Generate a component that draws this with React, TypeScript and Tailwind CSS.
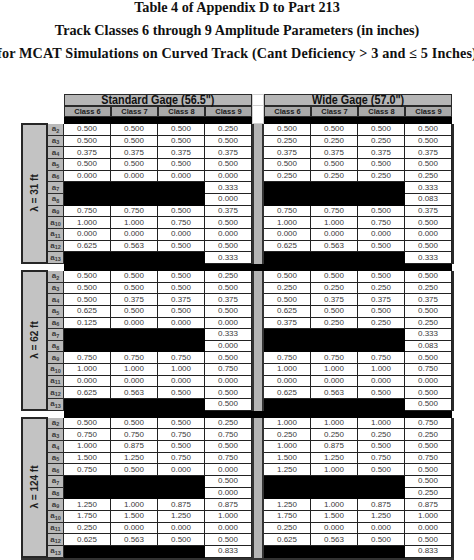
type Row = (string | null)[];

interface Block {
  label: string;
  std: Row[];
  wide: Row[];
}

const B = null;

const blocks: Block[] = [
  {
    label: 'λ = 31 ft',
    std: [
      ['0.500', '0.500', '0.500', '0.250'],
      ['0.500', '0.500', '0.500', '0.500'],
      ['0.375', '0.375', '0.375', '0.375'],
      ['0.500', '0.500', '0.500', '0.500'],
      ['0.000', '0.000', '0.000', '0.000'],
      [B, B, B, '0.333'],
      [B, B, B, '0.000'],
      ['0.750', '0.750', '0.500', '0.375'],
      ['1.000', '1.000', '0.750', '0.500'],
      ['0.000', '0.000', '0.000', '0.000'],
      ['0.625', '0.563', '0.500', '0.500'],
      [B, B, B, '0.333'],
    ],
    wide: [
      ['0.500', '0.500', '0.500', '0.500'],
      ['0.250', '0.250', '0.250', '0.500'],
      ['0.375', '0.375', '0.375', '0.375'],
      ['0.500', '0.500', '0.500', '0.500'],
      ['0.250', '0.250', '0.250', '0.250'],
      [B, B, B, '0.333'],
      [B, B, B, '0.083'],
      ['0.750', '0.750', '0.500', '0.375'],
      ['1.000', '1.000', '0.750', '0.500'],
      ['0.000', '0.000', '0.000', '0.000'],
      ['0.625', '0.563', '0.500', '0.500'],
      [B, B, B, '0.333'],
    ],
  },
  {
    label: 'λ = 62 ft',
    std: [
      ['0.500', '0.500', '0.500', '0.250'],
      ['0.500', '0.500', '0.500', '0.500'],
      ['0.500', '0.375', '0.375', '0.375'],
      ['0.625', '0.500', '0.500', '0.500'],
      ['0.125', '0.000', '0.000', '0.000'],
      [B, B, B, '0.333'],
      [B, B, B, '0.000'],
      ['0.750', '0.750', '0.750', '0.500'],
      ['1.000', '1.000', '1.000', '0.750'],
      ['0.000', '0.000', '0.000', '0.000'],
      ['0.625', '0.563', '0.500', '0.500'],
      [B, B, B, '0.500'],
    ],
    wide: [
      ['0.500', '0.500', '0.500', '0.500'],
      ['0.250', '0.250', '0.250', '0.250'],
      ['0.500', '0.375', '0.375', '0.375'],
      ['0.625', '0.500', '0.500', '0.500'],
      ['0.375', '0.250', '0.250', '0.250'],
      [B, B, B, '0.333'],
      [B, B, B, '0.083'],
      ['0.750', '0.750', '0.750', '0.500'],
      ['1.000', '1.000', '1.000', '0.750'],
      ['0.000', '0.000', '0.000', '0.000'],
      ['0.625', '0.563', '0.500', '0.500'],
      [B, B, B, '0.500'],
    ],
  },
  {
    label: 'λ = 124 ft',
    std: [
      ['0.500', '0.500', '0.500', '0.250'],
      ['0.750', '0.750', '0.750', '0.750'],
      ['1.000', '0.875', '0.500', '0.500'],
      ['1.500', '1.250', '0.750', '0.750'],
      ['0.750', '0.500', '0.000', '0.000'],
      [B, B, B, '0.500'],
      [B, B, B, '0.000'],
      ['1.250', '1.000', '0.875', '0.875'],
      ['1.750', '1.500', '1.250', '1.000'],
      ['0.250', '0.000', '0.000', '0.000'],
      ['0.625', '0.563', '0.500', '0.500'],
      [B, B, B, '0.833'],
    ],
    wide: [
      ['1.000', '1.000', '1.000', '0.750'],
      ['0.250', '0.250', '0.250', '0.250'],
      ['1.000', '0.875', '0.500', '0.500'],
      ['1.500', '1.250', '0.750', '0.750'],
      ['1.250', '1.000', '0.500', '0.500'],
      [B, B, B, '0.500'],
      [B, B, B, '0.250'],
      ['1.250', '1.000', '0.875', '0.875'],
      ['1.750', '1.500', '1.250', '1.000'],
      ['0.250', '0.000', '0.000', '0.000'],
      ['0.625', '0.563', '0.500', '0.500'],
      [B, B, B, '0.833'],
    ],
  },
];

const subs = [2, 3, 4, 5, 6, 7, 8, 9, 10, 11, 12, 13];

function ValueGrid({ rows }: { rows: Row[] }) {
  return (
    <div className="grid w-[188px] grid-cols-4">
      {rows.flatMap((row, r) =>
        row.map((v, c) =>
          v === null ? (
            <div key={`${r}-${c}`} className="h-[11.67px] bg-black" />
          ) : (
            <div
              key={`${r}-${c}`}
              className="flex h-[11.67px] items-center justify-center border-b border-r border-[#222] bg-white text-[8px] leading-none text-[#3a3a3a]"
            >
              {v}
            </div>
          ),
        ),
      )}
    </div>
  );
}

function ClassRow() {
  return (
    <div className="flex w-[188px]">
      {['Class 6', 'Class 7', 'Class 8', 'Class 9'].map((c) => (
        <div
          key={c}
          className="flex h-[11px] w-[47px] items-center justify-center border border-[#2a2a2a] bg-[#a9a9a9] text-[7.5px] font-bold leading-none text-[#1a1a1a]"
        >
          {c}
        </div>
      ))}
    </div>
  );
}

function GageHeader({ title }: { title: string }) {
  return (
    <div className="flex h-[12px] w-[188px] items-center justify-center border border-[#2a2a2a] bg-[#b6b6b6]">
      <span className="inline-block scale-x-[0.9] whitespace-nowrap text-[12px] font-bold leading-none text-[#111]">
        {title}
      </span>
    </div>
  );
}

export default function App() {
  return (
    <div className="h-[560px] w-[474px] overflow-hidden bg-white font-['Liberation_Sans',Arial,sans-serif]">
      <div className="-mt-[4px] text-center font-['Liberation_Serif','Times_New_Roman',serif] text-[14.2px] font-bold leading-[23px] text-[#111]">
        <p>Table 4 of Appendix D to Part 213</p>
        <p>Track Classes 6 through 9 Amplitude Parameters (in inches)</p>
        <p className="-mx-4 whitespace-nowrap tracking-[0.15px]">
          for MCAT Simulations on Curved Track (Cant Deficiency &gt; 3 and ≤ 5 Inches)
        </p>
      </div>

      <div className="mt-[29px] pl-[21px]">
        {/* gage headers */}
        <div className="flex pl-[43px]">
          <GageHeader title={'Standard Gage (56.5")'} />
          <div className="w-[12px] border border-[#d0d0d0] bg-white" />
          <GageHeader title={'Wide Gage (57.0")'} />
        </div>
        <div className="flex pl-[43px]">
          <ClassRow />
          <div className="w-[12px] border-x border-[#d0d0d0] bg-white" />
          <ClassRow />
        </div>
        <div className="flex pl-[43px]">
          <div className="h-[7px] w-[188px] bg-black" />
          <div className="w-[12px] border-x border-b border-[#d0d0d0] bg-white" />
          <div className="h-[7px] w-[188px] bg-black" />
        </div>

        {blocks.map((b, i) => (
          <div key={b.label}>
            {i > 0 && (
              <div className="ml-[43px] h-[7px] w-[388px] bg-black" />
            )}
            <div className="flex">
              <div className="-mt-px flex w-[27px] items-center justify-center border-2 border-[#262626] bg-[#c3c3c3]">
                <span className="-rotate-90 whitespace-nowrap text-[10px] font-bold leading-none text-[#1e1e1e]">
                  {b.label}
                </span>
              </div>
              <div className="flex w-[16px] flex-col">
                {subs.map((n) => (
                  <div
                    key={n}
                    className="flex h-[11.67px] items-center justify-center border-b border-r border-[#2a2a2a] bg-[#b9b9b9] text-[8px] font-bold leading-none text-[#3a3a3a]"
                  >
                    a<sub className="text-[5.5px]">{n}</sub>
                  </div>
                ))}
              </div>
              <ValueGrid rows={b.std} />
              <div className="w-[12px] border-x-2 border-[#333] bg-[#b4b4b4]" />
              <div className="border-r-2 border-[#2a2a2a]">
                <ValueGrid rows={b.wide} />
              </div>
            </div>
          </div>
        ))}
        <div className="h-[3px] w-[433px] bg-[#333]" />
      </div>
    </div>
  );
}
